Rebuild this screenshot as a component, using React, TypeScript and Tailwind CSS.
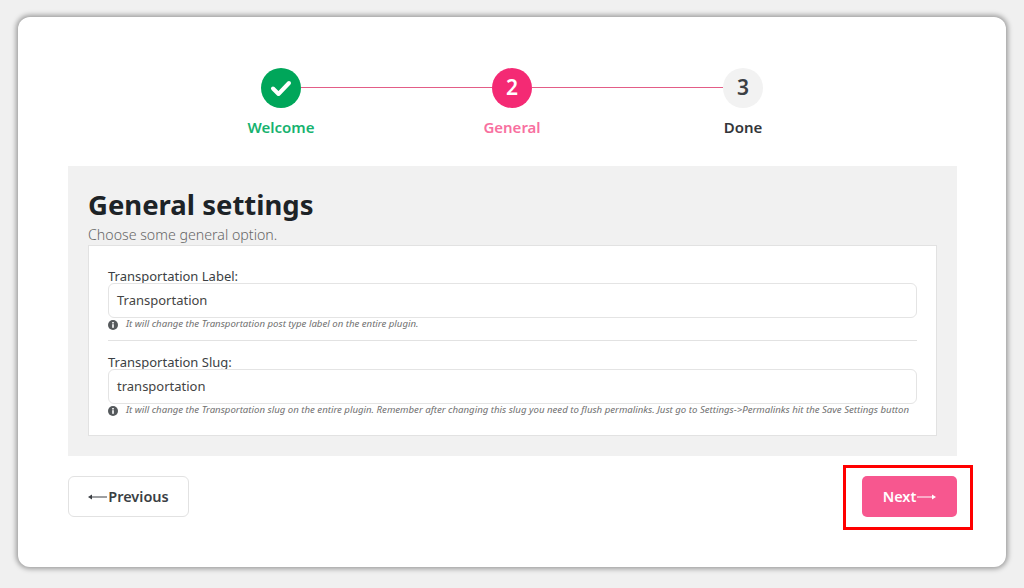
import React from "react";

function Info() {
  return (
    <svg width="10" height="10" viewBox="0 0 10 10" className="shrink-0">
      <circle cx="5" cy="5" r="5" fill="#55595c" />
      <rect x="4.2" y="4.2" width="1.6" height="3.6" fill="#fff" />
      <rect x="4.2" y="2" width="1.6" height="1.5" fill="#fff" />
    </svg>
  );
}

function Arrow({ left, color }: { left?: boolean; color: string }) {
  return (
    <svg width="19" height="8" viewBox="0 0 19 8" className="inline-block" fill="none">
      {left ? (
        <>
          <path d="M2 4 H19" stroke={color} strokeWidth="1" />
          <path d="M0 4 L4 1.5 V6.5 Z" fill={color} />
        </>
      ) : (
        <>
          <path d="M0 4 H17" stroke={color} strokeWidth="1" />
          <path d="M19 4 L15 1.5 V6.5 Z" fill={color} />
        </>
      )}
    </svg>
  );
}

function Field({ label, value, help }: { label: string; value: string; help: string }) {
  return (
    <div>
      <div className="h-[20px] text-[13px] leading-[27px] text-[#3b3f44]">{label}</div>
      <div className="relative bg-white border border-[#e4e4e4] rounded-[6px] h-[35px] pl-[8px] pt-[1px] flex items-center text-[13px] text-[#444]">
        {value}
      </div>
      <div className="flex items-center h-[13px] gap-[8px] text-[9.65px] italic text-[#707070]">
        <Info />
        <span className="whitespace-nowrap">{help}</span>
      </div>
    </div>
  );
}

function Step({ children, label, circle, text }: { children: React.ReactNode; label: string; circle: string; text: string }) {
  return (
    <div className="relative w-[40px] flex flex-col items-center">
      <div className={`w-[40px] h-[40px] rounded-full flex items-center justify-center ${circle}`}>{children}</div>
      <div className={`mt-[9px] text-[15px] leading-[20px] font-semibold whitespace-nowrap ${text}`}>{label}</div>
    </div>
  );
}

export default function App() {
  return (
    <div className="w-[1024px] h-[588px] bg-[#f0f0f0] pt-[17px] pl-[18px] overflow-hidden font-['Noto_Sans',sans-serif]">
      <div className="relative w-[988px] h-[550px] bg-white rounded-[12px] shadow-[0_0_5px_2px_rgba(0,0,0,0.35)] pt-[51px] pl-[50px] pr-[49px]">
        <div className="flex justify-center items-start h-[98px] pr-[1px]">
          <Step label="Welcome" circle="bg-[#00a65a]" text="text-[#17b26f]">
            <svg width="22" height="18" viewBox="0 0 22 18" fill="none">
              <path d="M3 9.5 L8.5 15 L19 4" stroke="#fff" strokeWidth="4" strokeLinecap="round" strokeLinejoin="round" />
            </svg>
          </Step>
          <div className="w-[191px] h-[1px] mt-[19px] bg-[#e35d87]" />
          <Step label="General" circle="bg-[#f42a74]" text="text-[#f8709f]">
            <span className="text-white text-[21px] font-semibold">2</span>
          </Step>
          <div className="w-[191px] h-[1px] mt-[19px] bg-[#e35d87]" />
          <Step label="Done" circle="bg-[#f2f2f2]" text="text-[#33363a]">
            <span className="text-[#3b3f44] text-[21px] font-semibold">3</span>
          </Step>
        </div>

        <div className="bg-[#f1f1f1] h-[290px] px-[20px] pt-[20px]">
          <h1 className="text-[27.5px] leading-[38px] font-bold text-[#1d2327]">General settings</h1>
          <p className="text-[14.2px] leading-[21px] font-light text-[#666]">Choose some general option.</p>
          <div className="bg-white border border-[#e2e2e2] h-[191px] px-[19px] pt-[17px]">
            <Field
              label="Transportation Label:"
              value="Transportation"
              help="It will change the Transportation post type label on the entire plugin."
            />
            <div className="h-[1px] bg-[#e2e2e2] mt-[9px] mb-[8px]" />
            <Field
              label="Transportation Slug:"
              value="transportation"
              help="It will change the Transportation slug on the entire plugin. Remember after changing this slug you need to flush permalinks. Just go to Settings->Permalinks hit the Save Settings button"
            />
          </div>
        </div>

        <div className="flex justify-between mt-[20px]">
          <button className="w-[121px] h-[41px] bg-white border border-[#e2e2e2] rounded-[6px] text-[14.5px] font-semibold text-[#3b3f44] inline-flex items-center justify-center gap-[1px]">
            <Arrow left color="#3b3f44" />
            <span>Previous</span>
          </button>
          <div className="relative">
            <button className="w-[95px] h-[41px] bg-[#f7578f] rounded-[5px] text-[14.5px] font-semibold text-white inline-flex items-center justify-center gap-[1px]">
              <span>Next</span>
              <Arrow color="#ffffff" />
            </button>
            <div className="absolute left-[-19px] top-[-11px] w-[130px] h-[65px] border-[3px] border-[#ff0000]" />
          </div>
        </div>
      </div>
    </div>
  );
}
